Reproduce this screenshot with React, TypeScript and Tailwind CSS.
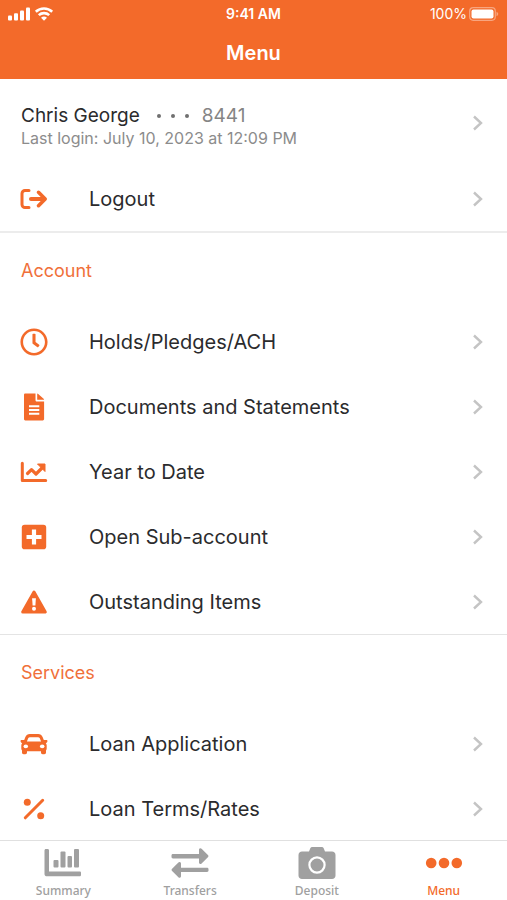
import React from 'react';
import { FaRegClock } from 'react-icons/fa';

interface IconProps {
  className?: string;
}

const ChevronIcon = ({ className = '' }: IconProps) => (
  <svg viewBox="0 0 10 16" className={className} fill="none" stroke="currentColor" strokeWidth="2.4" aria-hidden="true">
    <path d="M1 1.5 8 8l-7 6.5" />
  </svg>
);

const LogoutIcon = ({ className = '' }: IconProps) => (
  <svg viewBox="0 0 28 28" className={className} fill="none" stroke="currentColor" strokeLinecap="round" strokeLinejoin="round" aria-hidden="true">
    <path strokeWidth="3" d="M9 5.5H5A3 3 0 0 0 2 8.5v11a3 3 0 0 0 3 3h4" />
    <path strokeWidth="4" d="M11 14h13" />
    <path strokeWidth="3.6" d="m18.5 7.3 6.7 6.7-6.7 6.7" />
  </svg>
);

const FileIcon = ({ className = '' }: IconProps) => (
  <svg viewBox="0 0 28 28" className={className} fill="currentColor" aria-hidden="true">
    <path d="M5.3.6h10.2v6.6c0 .8.6 1.3 1.3 1.3h7.3v17.6c0 .8-.6 1.3-1.3 1.3H5.3c-.8 0-1.3-.6-1.3-1.3V1.9C4 1.100 4.600.6 5.300.6Z" />
    <path d="M17.200.6c.4 0 .7.200 1 .5l5.400 4.700c.3.300.5.600.5 1h-6.900Z" />
    <path stroke="#fff" strokeWidth="1.900" d="M9 13.300h10.300M9 17h10.300M9 20.700h10.300" />
  </svg>
);

const TrendIcon = ({ className = '' }: IconProps) => (
  <svg viewBox="0 0 28 28" className={className} fill="none" stroke="currentColor" aria-hidden="true">
    <path strokeWidth="3" strokeLinecap="round" strokeLinejoin="round" d="M2.300 5.300v17.300h23.400" />
    <path strokeWidth="3.200" strokeLinejoin="round" strokeLinecap="round" d="m7.500 15.500 4-3.800 4.500 4.300 6-6" />
    <path fill="currentColor" strokeWidth="1" strokeLinejoin="round" d="M17.500 6H25v7.500Z" />
  </svg>
);

const PlusBoxIcon = ({ className = '' }: IconProps) => (
  <svg viewBox="0 0 28 28" className={className} fill="currentColor" aria-hidden="true">
    <rect x="1.800" y="1.800" width="24.400" height="24.400" rx="2.800" />
    <path stroke="#fff" strokeWidth="4.200" d="M14 6.500v15M6.500 14h15" />
  </svg>
);

const WarningIcon = ({ className = '' }: IconProps) => (
  <svg viewBox="0 0 28 28" className={className} aria-hidden="true">
    <path fill="currentColor" stroke="currentColor" strokeWidth="3" strokeLinejoin="round" d="M14 4 25.300 24H2.700Z" />
    <path fill="#fff" d="M12.100 10.300h3.800l-.5 7.200h-2.800Z" />
    <circle cx="14" cy="20.800" r="2" fill="#fff" />
  </svg>
);

const CarIcon = ({ className = '' }: IconProps) => (
  <svg viewBox="0 0 28 28" className={className} aria-hidden="true">
    <path fill="currentColor" d="M9.800 4h8.400c2.100 0 3.600 1.100 4.400 3l1.200 2.900h2.700c.7 0 1.100.6 1 1.200l-.3 1c-.1.500-.5.800-1 .8h-.4c.6.700.9 1.500.9 2.500v3.200c0 .8-.2 1.500-.7 2v2c0 1-.7 1.700-1.700 1.700h-1.600c-1 0-1.700-.7-1.700-1.700v-1.300H7v1.300c0 1-.7 1.700-1.700 1.700H3.700c-1 0-1.700-.7-1.700-1.700v-2c-.5-.5-.7-1.200-.7-2v-3.200c0-1 .3-1.800.9-2.500h-.4c-.5 0-.9-.3-1-.8l-.3-1c-.1-.6.300-1.200 1-1.200h2.700L5.400 7c.8-1.900 2.300-3 4.400-3Z" />
    <path fill="#fff" d="M10 7.200h8c.9 0 1.500.4 1.800 1.100l1.300 3.200H6.900l1.300-3.200c.3-.7.900-1.100 1.800-1.100Z" />
    <ellipse cx="5.800" cy="16.400" rx="2.300" ry="1.800" fill="#fff" />
    <ellipse cx="22.200" cy="16.400" rx="2.300" ry="1.800" fill="#fff" />
  </svg>
);

const PercentIcon = ({ className = '' }: IconProps) => (
  <svg viewBox="0 0 28 28" className={className} aria-hidden="true">
    <path stroke="currentColor" strokeWidth="3" strokeLinecap="round" d="M5.300 22.800 22.700 5.300" />
    <circle cx="7.300" cy="7.300" r="3.500" fill="currentColor" />
    <circle cx="20.700" cy="20.700" r="3.500" fill="currentColor" />
  </svg>
);

const SummaryIcon = ({ className = '' }: IconProps) => (
  <svg viewBox="0 0 38 32" className={className} fill="currentColor" aria-hidden="true">
    <path d="M2 2h1.500C4.600 2 5 2.600 5 3.500v21h30.500c1 0 1.500.5 1.500 1.300V28c0 .9-.6 1.300-1.500 1.300H3C1.500 29.300.5 28.400.5 27V3.500C.5 2.600 1 2 2 2Z" />
    <rect x="9.500" y="13" width="5" height="7.500" rx="1" />
    <rect x="16.500" y="4.500" width="5" height="16" rx="1" />
    <rect x="23.500" y="9" width="4.500" height="11.500" rx="1" />
    <rect x="30" y="2" width="5" height="18.500" rx="1" />
  </svg>
);

const TransferIcon = ({ className = '' }: IconProps) => (
  <svg viewBox="0 0 38 32" className={className} fill="currentColor" aria-hidden="true">
    <path d="M2 7h26V2.800c0-1.500 1.600-2 2.600-1l6.300 6.300c.7.700.7 1.500 0 2.200l-6.300 6.200c-1 1-2.600.4-2.600-1v-4H2c-1 0-1.500-.5-1.500-1.400V8.500C.5 7.500 1 7 2 7Z" />
    <path d="M36 20.700H10v-4.200c0-1.500-1.600-2-2.600-1L1.100 21.700c-.7.700-.7 1.500 0 2.200l6.300 6.300c1 1 2.600.4 2.600-1V25h26c1 0 1.500-.5 1.500-1.400v-1.400c0-1-.5-1.500-1.500-1.500Z" />
  </svg>
);

const CameraIcon = ({ className = '' }: IconProps) => (
  <svg viewBox="0 0 38 32" className={className} aria-hidden="true">
    <path fill="currentColor" d="M4 4.500h7l1.200-3C12.600.5 13.300 0 14.300 0h9.400c1 0 1.700.5 2.100 1.500l1.200 3h7c2 0 3.500 1.500 3.500 3.500v20.500c0 2-1.500 3.500-3.500 3.500H4c-2 0-3.500-1.500-3.500-3.500V8c0-2 1.500-3.500 3.500-3.500Z" />
    <circle cx="19" cy="18" r="7.600" fill="none" stroke="#fff" strokeWidth="2.200" />
  </svg>
);

const DotsIcon = ({ className = '' }: IconProps) => (
  <svg viewBox="0 0 38 32" className={className} fill="currentColor" aria-hidden="true">
    <circle cx="6.200" cy="16" r="5.300" />
    <circle cx="19" cy="16" r="5.300" />
    <circle cx="31.800" cy="16" r="5.300" />
  </svg>
);

const SignalIcon = ({ className = '' }: IconProps) => (
  <svg viewBox="0 0 22 14" className={className} fill="currentColor" aria-hidden="true">
    <rect x="0" y="8.500" width="4" height="5" rx="1" />
    <rect x="6" y="6.300" width="4" height="7.200" rx="1" />
    <rect x="12" y="3.500" width="4" height="10" rx="1" />
    <rect x="18" y=".5" width="4" height="13" rx="1" />
  </svg>
);

const WifiIcon = ({ className = '' }: IconProps) => (
  <svg viewBox="0 0 18 14" className={className} fill="none" stroke="currentColor" strokeWidth="2.600" aria-hidden="true">
    <path d="M.8 4.700a12 12 0 0 1 16.400 0" />
    <path d="M3.800 8.100a7.700 7.700 0 0 1 10.400 0" />
    <path fill="currentColor" stroke="none" d="M6 10.800a4.500 4.500 0 0 1 6 0l-3 3Z" />
  </svg>
);

const BatteryIcon = ({ className = '' }: IconProps) => (
  <svg viewBox="0 0 30 14" className={className} aria-hidden="true">
    <rect x=".7" y=".7" width="25.600" height="12.600" rx="3.500" fill="none" stroke="#fff" strokeOpacity=".4" strokeWidth="1.200" />
    <rect x="2.500" y="2.500" width="22" height="9" rx="2" fill="#fff" />
    <path fill="#fff" fillOpacity=".4" d="M27.500 4.800c2.300.8 2.300 3.600 0 4.400Z" />
  </svg>
);

interface MenuEntry {
  label: string;
  Icon: React.ElementType;
}

const accountItems: MenuEntry[] = [
  { label: 'Holds/Pledges/ACH', Icon: FaRegClock },
  { label: 'Documents and Statements', Icon: FileIcon },
  { label: 'Year to Date', Icon: TrendIcon },
  { label: 'Open Sub-account', Icon: PlusBoxIcon },
  { label: 'Outstanding Items', Icon: WarningIcon },
];

const serviceItems: MenuEntry[] = [
  { label: 'Loan Application', Icon: CarIcon },
  { label: 'Loan Terms/Rates', Icon: PercentIcon },
];

const tabs = [
  { label: 'Summary', Icon: SummaryIcon, active: false },
  { label: 'Transfers', Icon: TransferIcon, active: false },
  { label: 'Deposit', Icon: CameraIcon, active: false },
  { label: 'Menu', Icon: DotsIcon, active: true },
];

const MenuRow = ({ label, Icon }: MenuEntry) => (
  <button type="button" className="flex h-[65px] w-full items-center pl-5 pr-6 text-left">
    <Icon className="h-7 w-7 shrink-0 text-[#f36a2a]" />
    <span className="ml-[41px] flex-1 text-xl text-[#2b2b2d]">{label}</span>
    <ChevronIcon className="h-4 w-[10px] text-[#c4c4c4]" />
  </button>
);

const SectionTitle = ({ children }: { children: React.ReactNode }) => (
  <h2 className="flex h-[76px] items-center pl-[21px] text-lg text-[#f0703a]">{children}</h2>
);

export default function App() {
  return (
    <div className="flex h-screen flex-col bg-white font-['Inter',sans-serif]">
      <header className="h-[79px] shrink-0 bg-[#f36a2a] text-white">
        <div className="grid h-7 grid-cols-3 items-center px-2">
          <div className="flex items-center gap-1">
            <SignalIcon className="h-[14px] w-[22px]" />
            <WifiIcon className="h-[14px] w-[20px]" />
          </div>
          <span className="text-center text-sm font-semibold">9:41 AM</span>
          <div className="flex items-center justify-end gap-[2px] text-sm">
            100%
            <BatteryIcon className="h-[14px] w-[30px]" />
          </div>
        </div>
        <h1 className="text-center text-xl leading-[50px] font-semibold">Menu</h1>
      </header>

      <main className="min-h-0 flex-1 overflow-y-auto [scrollbar-width:none]">
        <section className="border-b-2 border-[#ececec]">
          <button type="button" className="flex h-[87px] w-full items-center pl-[21px] pr-6 text-left">
            <span className="flex-1 pt-[6px]">
              <span className="flex items-center text-[19px] leading-6 text-[#2b2b2d]">
                Chris George
                <svg viewBox="0 0 34 4" className="mr-3 ml-4 h-1 w-[34px] text-[#707070]" fill="currentColor" aria-hidden="true">
                  <circle cx="3" cy="2" r="2" />
                  <circle cx="17" cy="2" r="2" />
                  <circle cx="31" cy="2" r="2" />
                </svg>
                <span className="text-[#858585]">8441</span>
              </span>
              <span className="block text-base leading-5 text-[#8c8c8c]">Last login: July 10, 2023 at 12:09 PM</span>
            </span>
            <ChevronIcon className="h-4 w-[10px] text-[#c4c4c4]" />
          </button>
          <MenuRow label="Logout" Icon={LogoutIcon} />
        </section>

        <section className="border-b border-[#e4e4e4]">
          <SectionTitle>Account</SectionTitle>
          {accountItems.map(item => (
            <MenuRow key={item.label} {...item} />
          ))}
        </section>

        <section>
          <SectionTitle>Services</SectionTitle>
          {serviceItems.map(item => (
            <MenuRow key={item.label} {...item} />
          ))}
        </section>
      </main>

      <nav className="grid h-[60px] shrink-0 grid-cols-4 border-t border-[#e0e0e0] bg-white font-['Noto_Sans',sans-serif]">
        {tabs.map(({ label, Icon, active }) => (
          <a
            key={label}
            href="#"
            className={`flex flex-col items-center pt-[6px] text-xs font-medium ${active ? 'text-[#f36a2a]' : 'text-[#a0a0a0]'}`}
          >
            <Icon className="h-8 w-[38px]" />
            <span className="mt-1">{label}</span>
          </a>
        ))}
      </nav>
    </div>
  );
}
